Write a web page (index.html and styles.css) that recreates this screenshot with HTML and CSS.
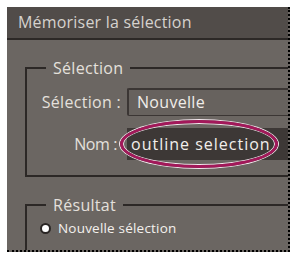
FILE: index.html
```html
<!DOCTYPE html>
<html lang="fr">
<head>
<meta charset="utf-8">
<link rel="stylesheet" href="styles.css">
</head>
<body>
<div class="panel">
  <div class="title">Mémoriser la sélection</div>
  <div class="content">
    <fieldset class="group group-sel">
      <legend>Sélection</legend>
      <div class="row">
        <span class="label">Sélection :</span>
        <div class="select">Nouvelle</div>
      </div>
      <div class="row row-name">
        <span class="label">Nom :</span>
        <div class="input">outline selection</div>
        <span class="ellipse"></span>
      </div>
    </fieldset>
    <fieldset class="group group-res">
      <legend>Résultat</legend>
      <div class="radio"><span class="dot"></span>Nouvelle sélection</div>
    </fieldset>
  </div>
</div>
</body>
</html>
```
FILE: styles.css
```css
html, body {
  margin: 0;
  background: #ffffff;
}
body {
  width: 292px;
  height: 254px;
  overflow: hidden;
  font-family: "Open Sans", "DejaVu Sans", sans-serif;
}
.panel {
  margin: 7px 0 0 7px;
  width: 281px;
  height: 243px;
  background: #6b6662;
  border-right: 2px dotted #000;
  border-bottom: 2px dotted #000;
  overflow: hidden;
  display: flex;
  flex-direction: column;
}
.title {
  height: 31px;
  background: #514c49;
  color: #d6d2ce;
  font-size: 16px;
  letter-spacing: 0.2px;
  line-height: 31px;
  padding-left: 11px;
  border-bottom: 2px solid #2c2826;
  flex: none;
}
.content {
  padding: 19px 0 0 18px;
  display: flex;
  flex-direction: column;
  gap: 19px;
}
.group {
  margin: 0;
  width: 300px;
  border: 2px solid #2c2826;
  border-right: none;
  padding: 0;
  color: #e4e0dc;
}
.group legend {
  padding: 0 7px;
  font-size: 16px;
  letter-spacing: 0.3px;
  line-height: 18px;
}
.group-sel {
  height: 103px;
  padding: 11px 0 0 14px;
}
.group-sel legend {
  margin-left: 5px;
}
.row {
  display: flex;
  align-items: center;
  position: relative;
}
.label {
  width: 80px;
  box-sizing: border-box;
  text-align: right;
  font-size: 16px;
  letter-spacing: 0.3px;
  margin-right: 6px;
  white-space: nowrap;
}
.row-name .label {
  letter-spacing: -0.4px;
  padding-right: 4px;
}
.select {
  flex: 1;
  height: 25px;
  line-height: 25px;
  background: #67625e;
  border-top: 2px solid #3b3634;
  border-left: 2px solid #3b3634;
  border-bottom: 1px solid #3b3634;
  border-radius: 2px 0 0 2px;
  padding-left: 8px;
  font-size: 16px;
  letter-spacing: 0.3px;
  color: #f0ede9;
}
.row-name {
  margin-top: 12px;
}
.input {
  flex: 1;
  height: 32px;
  line-height: 32px;
  background: #3d3836;
  padding-left: 4px;
  font-size: 16px;
  letter-spacing: 1px;
  color: #f2efec;
}
.ellipse {
  position: absolute;
  left: 79px;
  top: -8px;
  width: 152px;
  height: 42px;
  border: 3px solid #a3185a;
  border-radius: 50%;
  box-shadow: 0 0 0 1px #f4e8ee, inset 0 0 0 1px #f4e8ee;
}
.group-res {
  height: 60px;
  padding: 5px 0 0 13px;
}
.group-res legend {
  margin-left: 6px;
}
.radio {
  display: flex;
  align-items: center;
  gap: 7px;
  font-size: 13.5px;
  letter-spacing: 0.2px;
  color: #f4f1ee;
}
.dot {
  width: 7px;
  height: 7px;
  border-radius: 50%;
  background: #ffffff;
  border: 2px solid #2a2624;
}
```
